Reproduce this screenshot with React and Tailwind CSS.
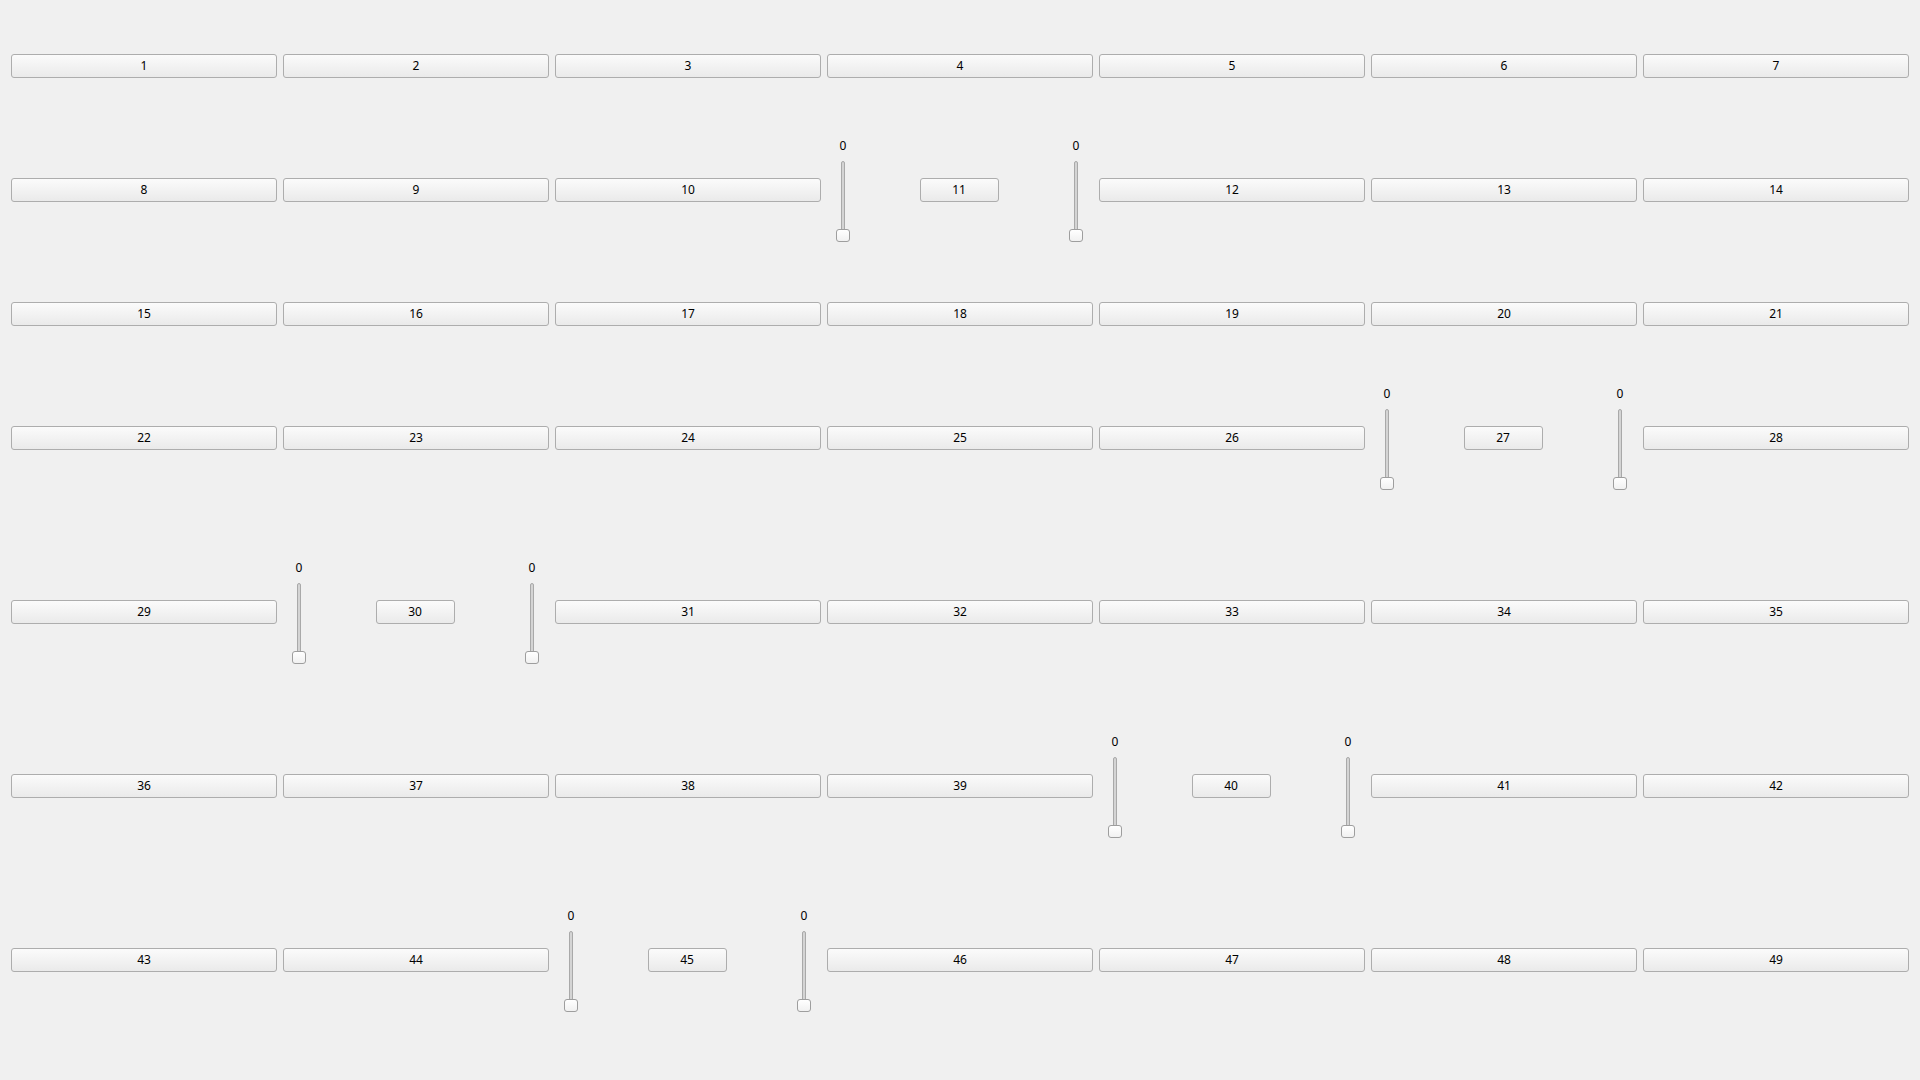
import React from "react";

// cells that hold a slider / button / slider group instead of a plain button
const sliderCells = { 11: true, 27: true, 30: true, 40: true, 45: true };

const rows = [
  { gap: "mt-0", items: [1, 2, 3, 4, 5, 6, 7] },
  { gap: "mt-[20px]", items: [8, 9, 10, 11, 12, 13, 14] },
  { gap: "mt-[20px]", items: [15, 16, 17, 18, 19, 20, 21] },
  { gap: "mt-[20px]", items: [22, 23, 24, 25, 26, 27, 28] },
  { gap: "mt-[70px]", items: [29, 30, 31, 32, 33, 34, 35] },
  { gap: "mt-[70px]", items: [36, 37, 38, 39, 40, 41, 42] },
  { gap: "mt-[70px]", items: [43, 44, 45, 46, 47, 48, 49] },
];

const PushButton = ({ label, className = "" }) => (
  <button
    type="button"
    className={`h-[24px] border border-[#adadad] rounded-[3px] bg-gradient-to-b from-[#fbfbfb] to-[#eaeaea] text-[12px] leading-none text-black ${className}`}
  >
    {label}
  </button>
);

const VSlider = () => (
  <div className="flex flex-col items-center h-[104px]">
    <span className="h-[14px] text-[12px] leading-[16px] text-black">0</span>
    <div className="relative mt-[9px] w-[14px] h-[81px]">
      <div className="absolute left-[5px] top-0 bottom-[6px] w-[4px] rounded-full border border-[#a9a9a9] bg-[#d4d4d4]" />
      <div className="absolute left-0 bottom-0 w-[14px] h-[13px] rounded-[3px] border border-[#9e9e9e] bg-gradient-to-b from-white to-[#f1f1f1]" />
    </div>
  </div>
);

const SliderCell = ({ label }) => (
  <div className="grid grid-cols-[32px_1fr_34px] items-center h-[104px]">
    <VSlider />
    <div className="flex justify-center">
      <PushButton label={label} className="w-[79px]" />
    </div>
    <VSlider />
  </div>
);

export default function App() {
  return (
    <div
      className="w-[1920px] h-[1080px] bg-[#f0f0f0] px-[11px] pt-[14px] overflow-hidden"
      style={{ fontFamily: '"Noto Sans", "Open Sans", sans-serif' }}
    >
      {rows.map((row, i) => (
        <div key={i} className={`grid grid-cols-7 gap-x-[6px] items-center h-[104px] ${row.gap}`}>
          {row.items.map((n) =>
            sliderCells[n] ? (
              <SliderCell key={n} label={n} />
            ) : (
              <PushButton key={n} label={n} className="w-full" />
            )
          )}
        </div>
      ))}
    </div>
  );
}
